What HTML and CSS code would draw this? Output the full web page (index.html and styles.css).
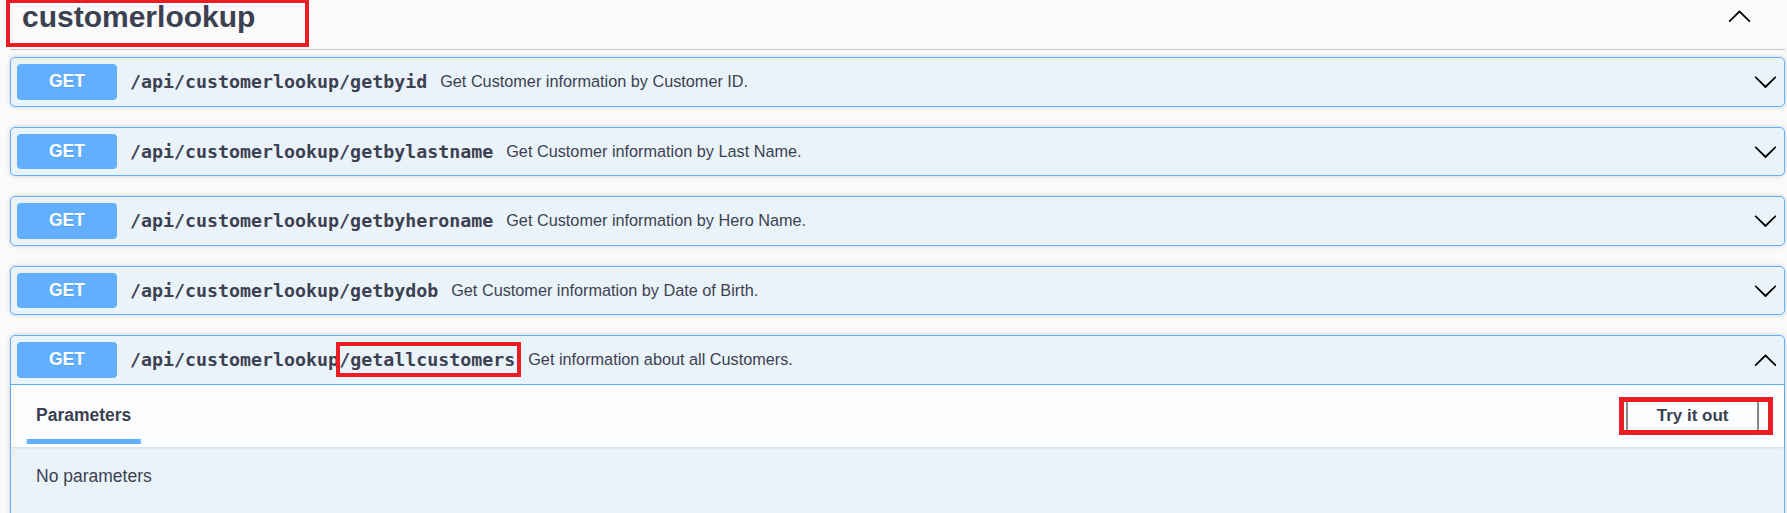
FILE: index.html
```html
<!DOCTYPE html>
<html lang="en">
<head>
<meta charset="utf-8">
<title>customerlookup</title>
<link rel="stylesheet" href="styles.css">
</head>
<body>
<div class="tag-section">
  <h3 class="tag">
    <span class="tag-title">customerlookup</span>
    <span class="mark mark-title"></span>
    <svg class="tag-arrow" viewBox="0 0 20 20"><path d="M17.418 14.908c.272.268.709.268.979 0s.271-.701 0-.969l-7.908-7.83c-.27-.268-.707-.268-.979 0l-7.908 7.83c-.27.268-.27.701 0 .969.271.268.709.268.979 0L10 7.767l7.418 7.141z"/></svg>
  </h3>
  <div class="ops">
    <div class="op">
      <div class="summary">
        <span class="method">GET</span>
        <span class="path">/api/customerlookup/getbyid</span>
        <span class="desc">Get Customer information by Customer ID.</span>
        <svg class="arrow" viewBox="0 0 20 20"><path d="M17.418 6.109c.272-.268.709-.268.979 0s.271.701 0 .969l-7.908 7.83c-.27.268-.707.268-.979 0l-7.908-7.83c-.27-.268-.27-.701 0-.969.271-.268.709-.268.979 0L10 13.25l7.418-7.141z"/></svg>
      </div>
    </div>
    <div class="op">
      <div class="summary">
        <span class="method">GET</span>
        <span class="path">/api/customerlookup/getbylastname</span>
        <span class="desc">Get Customer information by Last Name.</span>
        <svg class="arrow" viewBox="0 0 20 20"><path d="M17.418 6.109c.272-.268.709-.268.979 0s.271.701 0 .969l-7.908 7.83c-.27.268-.707.268-.979 0l-7.908-7.830c-.27-.268-.27-.701 0-.969.271-.268.709-.268.979 0L10 13.25l7.418-7.141z"/></svg>
      </div>
    </div>
    <div class="op">
      <div class="summary">
        <span class="method">GET</span>
        <span class="path">/api/customerlookup/getbyheroname</span>
        <span class="desc">Get Customer information by Hero Name.</span>
        <svg class="arrow" viewBox="0 0 20 20"><path d="M17.418 6.109c.272-.268.709-.268.979 0s.271.701 0 .969l-7.908 7.83c-.27.268-.707.268-.979 0l-7.908-7.83c-.27-.268-.27-.701 0-.969.271-.268.709-.268.979 0L10 13.25l7.418-7.141z"/></svg>
      </div>
    </div>
    <div class="op">
      <div class="summary">
        <span class="method">GET</span>
        <span class="path">/api/customerlookup/getbydob</span>
        <span class="desc">Get Customer information by Date of Birth.</span>
        <svg class="arrow" viewBox="0 0 20 20"><path d="M17.418 6.109c.272-.268.709-.268.979 0s.271.701 0 .969l-7.908 7.83c-.27.268-.707.268-.979 0l-7.908-7.83c-.27-.268-.27-.701 0-.969.271-.268.709-.268.979 0L10 13.25l7.418-7.141z"/></svg>
      </div>
    </div>
    <div class="op open">
      <div class="summary">
        <span class="method">GET</span>
        <span class="path">/api/customerlookup<span class="hl">/getallcustomers</span></span>
        <span class="desc">Get information about all Customers.</span>
        <svg class="arrow" viewBox="0 0 20 20"><path d="M17.418 14.908c.272.268.709.268.979 0s.271-.701 0-.969l-7.908-7.83c-.27-.268-.707-.268-.979 0l-7.908 7.83c-.27.268-.27.701 0 .969.271.268.709.268.979 0L10 7.767l7.418 7.141z"/></svg>
      </div>
      <div class="op-body">
        <div class="section-header">
          <div class="tab-header">
            <div class="tab-item active"><h4><span class="tab-label">Parameters</span></h4></div>
          </div>
          <div class="try-wrap">
            <button class="try">Try it out</button>
            <span class="mark mark-try"></span>
          </div>
        </div>
        <div class="params">
          <p>No parameters</p>
        </div>
      </div>
    </div>
  </div>
</div>
</body>
</html>
```
FILE: styles.css
```css
html, body {
  margin: 0;
  background: #fafafa;
}

body {
  padding: 0 2px 0 10px;
  height: 513px;
  overflow: hidden;
  font-family: "Liberation Sans", Arial, sans-serif;
  color: #3b4151;
}

.tag {
  position: relative;
  display: flex;
  align-items: flex-start;
  justify-content: space-between;
  height: 49px;
  margin: 0 0 7px;
  padding: 0 33px 0 12px;
  border-bottom: 1px solid #c5c6ca;
  font-size: 30px;
  font-weight: bold;
  line-height: 34px;
}

.tag-title {
  display: block;
}

.tag-arrow {
  width: 25px;
  height: 25px;
  margin-top: 2.6px;
  fill: #000;
}

.mark {
  position: absolute;
  box-sizing: border-box;
  pointer-events: none;
}

.mark-title {
  left: -4px;
  top: -1px;
  width: 303px;
  height: 48px;
  border: 4px solid #ec1c24;
}

.op {
  margin-bottom: 20px;
  border: 1px solid #61affe;
  border-radius: 5px;
  background: #ebf3fa;
  box-shadow: 0 0 4px rgba(0, 0, 0, 0.19);
}

.summary {
  display: flex;
  align-items: center;
  padding: 6px;
}

.open .summary {
  border-bottom: 1px solid #61affe;
}

.method {
  flex-shrink: 0;
  display: flex;
  align-items: center;
  justify-content: center;
  width: 100px;
  height: 35.5px;
  border-radius: 4px;
  background: #61affe;
  color: #fff;
  font-size: 17.5px;
  font-weight: bold;
  text-shadow: 0 1px 0 rgba(0, 0, 0, 0.1);
}

.path {
  flex-shrink: 0;
  padding: 0 13px;
  font-family: "DejaVu Sans Mono", "Liberation Mono", monospace;
  font-size: 18.3px;
  font-weight: bold;
  color: #3b4151;
}

.hl {
  position: relative;
}

.hl::after {
  content: "";
  position: absolute;
  left: -3px;
  right: -6px;
  top: -7px;
  bottom: -7px;
  border: 4px solid #ec1c24;
}

.desc {
  flex: 1;
  font-size: 16.25px;
  color: #3b4151;
}

.arrow {
  flex-shrink: 0;
  width: 25px;
  height: 25px;
  fill: #000;
}

.section-header {
  display: flex;
  align-items: center;
  justify-content: space-between;
  box-sizing: border-box;
  min-height: 62.5px;
  padding: 0 25px;
  background: rgba(255, 255, 255, 0.8);
  box-shadow: 0 1px 2px rgba(0, 0, 0, 0.1);
}

.tab-header {
  display: flex;
}

.tab-item h4 {
  margin: 0;
  font-size: 17.5px;
  font-weight: bold;
  color: #3b4151;
}

.tab-label {
  position: relative;
}

.tab-label::after {
  content: "";
  position: absolute;
  left: 50%;
  bottom: -19px;
  width: 120%;
  height: 5px;
  transform: translateX(-50%);
  background: #61affe;
}

.try-wrap {
  position: relative;
  display: flex;
}

.try {
  padding: 6.25px 28.5px;
  border: 2.5px solid #888;
  border-radius: 5px;
  background: transparent;
  box-shadow: 0 1px 2px rgba(0, 0, 0, 0.1);
  font-family: "Liberation Sans", Arial, sans-serif;
  font-size: 17px;
  font-weight: bold;
  line-height: 19.5px;
  color: #3b4151;
}

.mark-try {
  left: -7px;
  right: -14px;
  top: -1px;
  bottom: -1px;
  border: 5px solid #ec1c24;
}

.params {
  padding: 18.5px 25px 40px;
}

.params p {
  margin: 0;
  font-size: 17.5px;
  color: #3b4151;
}
```
